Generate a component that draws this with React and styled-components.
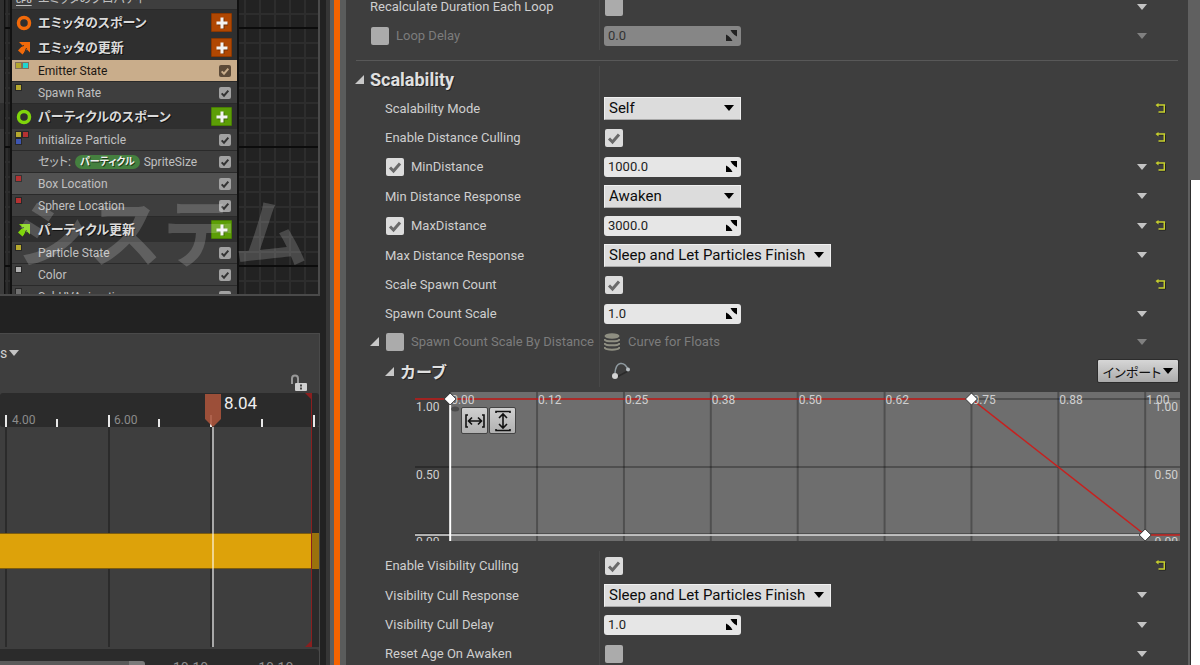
import { useState } from 'react'
import styled, { createGlobalStyle, css } from 'styled-components'

const modules = [
    { kind: 'item', label: 'エミッタのプロパティ', cpu: true },
    { kind: 'group', label: 'エミッタのスポーン', icon: 'ring', color: '#f26a0a', button: '#b04702' },
    { kind: 'group', label: 'エミッタの更新', icon: 'arrow', color: '#f26a0a', button: '#b04702' },
    { kind: 'item', label: 'Emitter State', dots: ['#b5a82e', '#1fd6d0'], selected: true, check: true },
    { kind: 'item', label: 'Spawn Rate', dots: ['#b5a82e'], check: true },
    { kind: 'group', label: 'パーティクルのスポーン', icon: 'ring', color: '#80d60c', button: '#5c9e06' },
    { kind: 'item', label: 'Initialize Particle', dots: ['#b5a82e', '#b53232', '#3d55b0'], check: true },
    { kind: 'item', label: 'セット:', tag: 'パーティクル', rest: 'SpriteSize', check: true },
    { kind: 'item', label: 'Box Location', dots: ['#b53232'], light: true, check: true },
    { kind: 'item', label: 'Sphere Location', dots: ['#b53232'], check: true },
    { kind: 'group', label: 'パーティクル更新', icon: 'arrow', color: '#80d60c', button: '#5c9e06' },
    { kind: 'item', label: 'Particle State', dots: ['#b5a82e'], check: true },
    { kind: 'item', label: 'Color', dots: ['#b0b0b0'], check: true },
    { kind: 'item', label: 'SubUVAnimation', dots: ['#707070'], check: true },
]

const responses = ['Sleep and Let Particles Finish', 'Awaken', 'Sleep', 'Kill']

export default function App() {
    return (
        <>
            <GlobalStyle />
            <Screen>
                <LeftColumn>
                    <SystemGraph />
                    <Timeline />
                </LeftColumn>
                <Splitter />
                <Details />
                <ScrollGutter />
            </Screen>
        </>
    )
}

function SystemGraph() {
    return (
        <Graph>
            <NeighbourNode />
            <Node>
                {modules.map((module, index) => (
                    module.kind === 'group' ?
                        <GroupRow key={index}>
                            <GroupIcon type={module.icon} color={module.color} />
                            <GroupName>{module.label}</GroupName>
                            <AddButton type="button" $color={module.button} aria-label={`${module.label} +`}>
                                <svg width="12" height="12" viewBox="0 0 12 12">
                                    <path d="M5.500 1.500h3v4h3.500v3H8.500V12h-3V8.500H1.500v-3h4z" fill="#000" opacity=".35" />
                                    <path d="M4.500 0.500h3v4h4v3h-4v4h-3v-4h-4v-3h4z" fill="#f2f2f2" />
                                </svg>
                            </AddButton>
                        </GroupRow> :
                        <ModuleRow key={index} $selected={module.selected} $light={module.light}>
                            {module.cpu ? <Cpu>CPU</Cpu> : <Dots>
                                {(module.dots || []).map((color) => <Dot key={color} $color={color} />)}
                            </Dots>}
                            <ModuleName>
                                {module.label}
                                {module.tag && <Tag>{module.tag}</Tag>}
                                {module.rest}
                            </ModuleName>
                            {module.check && <Tick small dark={module.selected} name={module.label} start />}
                        </ModuleRow>
                ))}
            </Node>
            <Watermark>システム</Watermark>
        </Graph>
    )
}

function GroupIcon({ type, color }) {
    return (
        <svg width="16" height="16" viewBox="0 0 16 16">
            {type === 'ring' ?
                <circle cx="8" cy="8" r="5.500" fill="none" stroke={color} strokeWidth="3.500" /> :
                <path d="M3 2H14V12.500L11 9.500L6.500 14.500L2 10.500L6.500 5.500Z" fill={color} />}
            {type === 'arrow' && <path d="M2 7.500L8 5.500M8 14L10.500 8" stroke="#2f2f2f" />}
        </svg>
    )
}

function Tick({ start = false, small, dark, disabled, name }) {
    const [checked, setChecked] = useState(start)

    return (
        <TickBox $small={small}>
            <TickInput
                type="checkbox"
                aria-label={name}
                checked={checked}
                onChange={(event) => setChecked(event.target.checked)}
                $small={small}
                $dark={dark}
                disabled={disabled}
            />
            {checked && <svg viewBox="0 0 18 18">
                <path d="M4 9.500L7.500 13L14 5.500" fill="none" stroke={dark ? '#c9ad8b' : small ? '#333' : '#6a6a6a'} strokeWidth="3" />
            </svg>}
        </TickBox>
    )
}

function Caret({ color = '#c4c4c4' }) {
    return (
        <svg width="10" height="6" viewBox="0 0 10 6">
            <path d="M0 0H10L5 6Z" fill={color} />
        </svg>
    )
}

function Expander() {
    return (
        <svg width="9" height="9" viewBox="0 0 9 9">
            <path d="M9 0V9H0Z" fill="#c8c8c8" />
        </svg>
    )
}

function Combo({ options, wide, name }) {
    return (
        <Overlay $width={wide ? '227px' : '137px'}>
            <Select aria-label={name}>
                {options.map((option) => <option key={option}>{option}</option>)}
            </Select>
            <OverlayIcon $right="7px"><Caret color="#000" /></OverlayIcon>
        </Overlay>
    )
}

function NumberBox({ value, disabled, name }) {
    const [number, setNumber] = useState(value)

    return (
        <Overlay $width="137px">
            <NumberInput aria-label={name} value={number} disabled={disabled} onChange={(event) => setNumber(event.target.value)} />
            <OverlayIcon $right="4px">
                <svg width="11" height="11" viewBox="0 0 11 11">
                    <path d="M4.500 0H11V6.500L8.500 5L6 2.500ZM0 4.500L2.500 6L5 8.500L6.500 11H0Z" fill={disabled ? '#222' : '#000'} />
                </svg>
            </OverlayIcon>
        </Overlay>
    )
}

function Property({ label, depth = 2, tall, short, edit, muted, expander, menu, reset, children }) {
    return (
        <Row $height={tall ? '30px' : short ? '27px' : '29px'}>
            <Label $depth={expander ? 1 : depth} $muted={muted}>
                {expander && <Expander />}
                {edit && <Tick name={label} start={edit === 'on'} />}
                <span>{label}</span>
            </Label>
            <Value $muted={muted}>{children}</Value>
            <Cell>{menu && <IconButton type="button" aria-label={`${label} menu`}><Caret color={muted ? '#808080' : '#c4c4c4'} /></IconButton>}</Cell>
            <Cell>
                {reset && <IconButton type="button" aria-label={`${label} reset`}>
                    <svg width="12" height="11" viewBox="0 0 12 11" fill="none">
                        <path d="M4 3H10.500V10H4" stroke="#1c1c1c" />
                        <path d="M2 2H9.300V9H3.500" stroke="#c6cf2c" strokeWidth="1.500" />
                        <path d="M0.500 2L3.500 0V4.500Z" fill="#c6cf2c" />
                    </svg>
                </IconButton>}
            </Cell>
        </Row>
    )
}

function Details() {
    return (
        <Panel>
            <Property label="Recalculate Duration Each Loop" depth={1} menu>
                <Tick name="Recalculate Duration Each Loop" />
            </Property>
            <Property label="Loop Delay" depth={1} edit="off" muted menu>
                <NumberBox name="Loop Delay value" value="0.0" disabled />
            </Property>
            <Divider />
            <Row $height="27px">
                <Heading><Expander />Scalability</Heading>
                <Value />
            </Row>
            <Property label="Scalability Mode" tall reset>
                <Combo name="Scalability Mode" options={['Self', 'System']} />
            </Property>
            <Property label="Enable Distance Culling" reset>
                <Tick name="Enable Distance Culling" start />
            </Property>
            <Property label="MinDistance" edit="on" menu reset>
                <NumberBox name="MinDistance value" value="1000.0" />
            </Property>
            <Property label="Min Distance Response" tall menu>
                <Combo name="Min Distance Response" options={['Awaken', 'Sleep', 'Kill']} />
            </Property>
            <Property label="MaxDistance" edit="on" menu reset>
                <NumberBox name="MaxDistance value" value="3000.0" />
            </Property>
            <Property label="Max Distance Response" tall menu>
                <Combo name="Max Distance Response" options={responses} wide />
            </Property>
            <Property label="Scale Spawn Count" reset>
                <Tick name="Scale Spawn Count" start />
            </Property>
            <Property label="Spawn Count Scale" menu>
                <NumberBox name="Spawn Count Scale value" value="1.0" />
            </Property>
            <Property label="Spawn Count Scale By Distance" edit="off" short muted expander menu>
                <svg width="16" height="18" viewBox="0 0 16 18">
                    <path d="M0.500 6c0 3 15 3 15 0M0.500 10c0 3 15 3 15 0M0.500 14c0 3.500 15 3.500 15 0" fill="none" stroke="#8f8f82" strokeWidth="2" />
                    <ellipse cx="8" cy="3" rx="7.500" ry="2.800" fill="#8f8f82" />
                </svg>
                <span>Curve for Floats</span>
            </Property>
            <CurveRow>
                <CurveHeading><Expander />カーブ</CurveHeading>
                <Value>
                    <svg width="28" height="20" viewBox="-6 0 28 20">
                        <path d="M5 12C6 0 14 0 18 8" fill="none" stroke="#8f9aa0" strokeWidth="1.500" />
                        <path d="M5 17L18 10" stroke="#2a2a2a" strokeWidth="1.500" />
                        <circle cx="5" cy="15" r="3" fill="#d4d4d4" />
                        <circle cx="18" cy="8.500" r="2" fill="#b8bec2" />
                    </svg>
                </Value>
                <ImportButton type="button">インポート<Caret color="#000" /></ImportButton>
            </CurveRow>
            <CurveEditor />
            <Property label="Enable Visibility Culling" reset>
                <Tick name="Enable Visibility Culling" start />
            </Property>
            <Property label="Visibility Cull Response" tall menu>
                <Combo name="Visibility Cull Response" options={responses} wide />
            </Property>
            <Property label="Visibility Cull Delay" menu>
                <NumberBox name="Visibility Cull Delay value" value="1.0" />
            </Property>
            <Property label="Reset Age On Awaken" menu>
                <Tick name="Reset Age On Awaken" />
            </Property>
        </Panel>
    )
}

const times = ['0.00', '0.12', '0.25', '0.38', '0.50', '0.62', '0.75', '0.88', '1.00']
const levels = [['1.00', 7], ['0.50', 75], ['0.00', 142]]
const keys = [[0, 7], [0.75, 7], [1, 143]]

// the plot starts after the value labels and leaves some room behind t = 1
const timeToX = (t) => `${4.6 + 90.85 * t}%`

function CurveEditor() {
    return (
        <CurveArea>
            <CurveChart>
                <rect x={timeToX(0)} y="0" width="100%" height="149" fill="#6e6e6e" />
                {levels.map(([label, y]) => (
                    <line key={label} x1="0" x2="100%" y1={y} y2={y} stroke="#000" strokeOpacity=".28" strokeWidth="2" />
                ))}
                {times.map((label, index) => (
                    <line key={label} x1={timeToX(index / 8)} x2={timeToX(index / 8)} y1="0" y2="149" stroke="#000" strokeOpacity=".28" strokeWidth="2" />
                ))}
                <line x1="0" x2={timeToX(1)} y1="143" y2="143" stroke="#dcdcdc" strokeWidth="1.500" />
                <line x1={timeToX(0)} x2={timeToX(0)} y1="7" y2="149" stroke="#fff" strokeWidth="2" />
                <svg x={timeToX(0)} y="17" overflow="visible">
                    <ellipse cx="5" cy="0" rx="4" ry="2.500" fill="#4c4c4c" />
                </svg>
                <g stroke="#c8201e" strokeWidth="1.500">
                    <line x1="0" x2={timeToX(0.75)} y1="7" y2="7" />
                    <line x1={timeToX(0.75)} x2={timeToX(1)} y1="7" y2="143" />
                    <line x1={timeToX(1)} x2="100%" y1="143" y2="143" />
                </g>
                {times.map((label, index) => (
                    <text key={label} x={timeToX(index / 8)} dx="1" y="12">{label}</text>
                ))}
                {levels.map(([label, y]) => (
                    <g key={label}>
                        <text x="1" y={y + 12}>{label}</text>
                        <text x="100%" dx="-2" y={y + 12} textAnchor="end">{label}</text>
                    </g>
                ))}
                {keys.map(([t, y]) => (
                    <svg key={t} x={timeToX(t)} y={y} overflow="visible">
                        <path d="M0-6L6 0L0 6L-6 0Z" fill="#fff" stroke="#333" />
                    </svg>
                ))}
            </CurveChart>
            <FitButtons>
                <FitButton type="button" aria-label="Fit horizontally">
                    <svg width="22" height="22" viewBox="0 0 22 22" fill="none" stroke="#111" strokeWidth="1.600">
                        <path d="M4 5H2V17H4M18 5H20V17H18M4.500 11H17.500M8 7.500L4.500 11L8 14.500M14 7.500L17.500 11L14 14.500" />
                    </svg>
                </FitButton>
                <FitButton type="button" aria-label="Fit vertically">
                    <svg width="22" height="22" viewBox="0 0 22 22" fill="none" stroke="#111" strokeWidth="1.600">
                        <path d="M4 3V1.500H18V3M4 19V20.500H18V19M11 4.500V17.500M7 8L11 4L15 8M7 14L11 18L15 14" />
                    </svg>
                </FitButton>
            </FitButtons>
        </CurveArea>
    )
}

function Timeline() {
    return (
        <TimelinePanel>
            <TimelineMenu type="button">s<Caret /></TimelineMenu>
            <LockRow>
                <IconButton type="button" aria-label="Lock">
                    <svg width="18" height="18" viewBox="0 0 18 18">
                        <path d="M2 10V4.500C2 0.500 8 0.500 8 4.500V9" fill="none" stroke="#999" strokeWidth="2" />
                        <rect x="5" y="9" width="12" height="8" rx="1" fill="#d0d0d0" />
                        <path d="M10 10.500h2v2h-2zM10 13.500h2v2h-2z" fill="#444" />
                    </svg>
                </IconButton>
            </LockRow>
            <TimeChart>
                <rect width="100%" height="34" rx="3" fill="#2b2b2b" />
                <rect x="312" y="34" width="7" height="220" fill="#2a2a2a" />
                {[6, 109, 211].map((x) => (
                    <line key={x} x1={x} x2={x} y1="34" y2="254" stroke="#2b2b2b" strokeWidth="2" />
                ))}
                {[6, 109, 211, 314].map((x) => (
                    <line key={x} x1={x} x2={x} y1="22" y2="34" stroke="#e8e8e8" strokeWidth="2" />
                ))}
                {[57, 159, 262].map((x) => (
                    <line key={x} x1={x} x2={x} y1="26" y2="34" stroke="#e8e8e8" strokeWidth="2" />
                ))}
                <text x="12" y="31">4.00</text>
                <text x="114" y="31">6.00</text>
                <rect y="140" width="311" height="36" fill="#7c5c10" />
                <rect y="141" width="311" height="34" fill="#dda20a" />
                <rect x="311" y="140" width="8" height="36" fill="#9a720c" />
                <path d="M305 0H312V6H311ZM305 254H312V248H311Z" fill="#8a1f1f" />
                <rect x="311" y="0" width="1" height="254" fill="#8a1f1f" />
                <line x1="213" x2="213" y1="34" y2="254" stroke="#fff" strokeOpacity=".55" strokeWidth="2" />
                <path d="M205 1H221V26L213 34L205 26Z" fill="#a8533b" fillOpacity=".9" />
                <TimeNow x="224" y="16">8.04</TimeNow>
            </TimeChart>
            <RangeBar>
                <RangeThumb />
                <RangeText>10.10</RangeText>
                <RangeText>10.10</RangeText>
            </RangeBar>
        </TimelinePanel>
    )
}

const GlobalStyle = createGlobalStyle`
    * {
        box-sizing: border-box;
    }

    body {
        margin: 0;
        background: #222;
        color: #d2d2d2;
        font-family: Roboto, 'Noto Sans CJK JP', sans-serif;
        font-size: 13px;
    }

    button, input, select {
        margin: 0;
        border: 0;
        padding: 0;
        font: inherit;
    }
`

const Screen = styled.main`
    display: flex;
    height: 100vh;
    overflow: hidden;
`

const LeftColumn = styled.div`
    flex: 0 0 326px;
    display: flex;
    flex-direction: column;
    gap: 37px;
    padding-right: 6px;
    background: #222;
`

const Graph = styled.section`
    position: relative;
    flex: 0 0 296px;
    display: flex;
    gap: 7px;
    overflow: hidden;
    border: solid #4a4a4a;
    border-width: 0 2px 2px 0;
    background-color: #222;
    background-image:
        linear-gradient(#0c0c0c 2px, transparent 2px),
        repeating-linear-gradient(#2d2d2d 0 2px, transparent 2px 15px),
        repeating-linear-gradient(90deg, #2d2d2d 0 2px, transparent 2px 15px);
    background-size: 119px 119px;
    background-position: 110px 27px;
`

const NeighbourNode = styled.div`
    flex: 0 0 5px;
    border-right: 1px solid #111;
    background: linear-gradient(#2f2f2f 0 60px, #3c3c3c 60px 103px, #2f2f2f 103px 129px, #3c3c3c 129px);
`

const Node = styled.div`
    flex: 0 0 225px;
    margin-top: -12px;
    background: #3c3c3c;
    box-shadow: 0 0 0 2px #111;
    align-self: flex-start;
`

const GroupRow = styled.div`
    display: flex;
    align-items: center;
    height: 25px;
    padding: 0 5px 0 4px;
    background: #2f2f2f;
    gap: 6px;
`

const GroupName = styled.strong`
    flex: 1;
    color: #dadada;
    font-size: 13px;
    line-height: 20px;
    font-feature-settings: 'palt';
    text-shadow: 1px 1px 0 #111;
`

const AddButton = styled.button`
    display: grid;
    place-items: center;
    width: 21px;
    height: 19px;
    border: 1px solid rgba(0, 0, 0, 0.2);
    border-radius: 1px;
    background: ${(props) => props.$color};
`

const ModuleRow = styled.div`
    display: flex;
    align-items: center;
    height: 22px;
    padding: 0 6px 0 4px;
    border-bottom: 1px solid #2a2a2a;
    background: ${(props) => props.$selected ? '#c9ad8b' : props.$light ? '#525252' : '#3e3e3e'};
    color: ${(props) => props.$selected ? '#1c1712' : '#c0c0c0'};
`

const Dots = styled.div`
    display: grid;
    grid-template-columns: 5px 5px;
    grid-auto-rows: 5px;
    gap: 2px;
    align-content: start;
    flex: 0 0 22px;
    align-self: stretch;
    padding-top: 3px;
`

const Dot = styled.i`
    background: ${(props) => props.$color};
    box-shadow: 0 0 0 1px rgba(0, 0, 0, 0.35);
`

const Cpu = styled.b`
    flex: 0 0 22px;
    font-size: 8px;
    line-height: 14px;
    text-decoration: underline;
    text-underline-offset: 2px;
    padding-top: 4px;
`

const ModuleName = styled.span`
    flex: 1;
    display: flex;
    align-items: center;
    gap: 4px;
    font-size: 12px;
    line-height: 18px;
    white-space: nowrap;
    font-feature-settings: 'palt';
`

const Tag = styled.span`
    padding: 0 5px;
    border-radius: 7px;
    background: #45803f;
    color: #f0f0f0;
    font-size: 10px;
    font-weight: 700;
    line-height: 14px;
    text-shadow: 1px 1px 0 #1d3a1a;
`

const Watermark = styled.div`
    position: absolute;
    right: 10px;
    bottom: 8px;
    color: rgba(255, 255, 255, 0.18);
    font-size: 74px;
    font-weight: 700;
    line-height: 100px;
    pointer-events: none;
`

const TimelinePanel = styled.section`
    flex: 1;
    display: flex;
    flex-direction: column;
    min-height: 0;
    overflow: hidden;
    border-top: 1px solid #4a4a4a;
    border-right: 1px solid #4a4a4a;
    background: #3e3e3e;
`

const TimelineMenu = styled.button`
    display: flex;
    flex: none;
    align-items: center;
    align-self: flex-start;
    gap: 2px;
    height: 38px;
    background: none;
    color: #d2d2d2;
    font-size: 14px;
`

const LockRow = styled.div`
    display: flex;
    flex: none;
    justify-content: flex-end;
    padding: 2px 11px 1px 0;
`

const TimeChart = styled.svg`
    flex: 0 0 254px;
    width: 100%;
    fill: #8c8c8c;
    font-size: 12px;
`

const TimeNow = styled.text`
    fill: #eee;
    font-size: 17px;
`

const RangeBar = styled.div`
    flex: 0 0 30px;
    display: flex;
    align-items: flex-start;
    gap: 50px;
    margin-top: 2px;
    border-radius: 0 4px 0 0;
    background: #2b2b2b;
`

const RangeThumb = styled.div`
    flex: 0 0 145px;
    height: 12px;
    margin: 12px -22px 0 0;
    border-radius: 0 3px 3px 0;
    background: linear-gradient(90deg, #5a5a5a 0 129px, #7a7a7a 129px);
`

const RangeText = styled.span`
    padding-top: 10px;
    color: #8c8c8c;
    font-size: 14px;
    line-height: 18px;
`

const Splitter = styled.div`
    flex: 0 0 20px;
    background: linear-gradient(90deg, #363636 0 4px, #5e5e5e 4px 8px, #f66300 8px 14px, #5a5c5c 14px);
`

const Panel = styled.section`
    flex: 1;
    min-width: 0;
    margin-top: -8px;
    background: #3e3e3e;
`

const Row = styled.div`
    display: grid;
    grid-template-columns: 253px minmax(0, 1fr) 24px 14px;
    align-items: stretch;
    height: ${(props) => props.$height};
    padding-right: 20px;
`

const Label = styled.div`
    display: flex;
    align-items: center;
    gap: 6px;
    padding-left: ${(props) => props.$depth === 1 ? '24px' : '39px'};
    color: ${(props) => props.$muted ? '#7c7c7c' : '#cfcfcf'};
    white-space: nowrap;
`

const Value = styled.div`
    display: flex;
    align-items: center;
    gap: 8px;
    padding-left: 4px;
    border-left: 1px solid #484848;
    color: ${(props) => props.$muted ? '#7c7c7c' : '#cfcfcf'};
`

const Cell = styled.div`
    display: grid;
    place-items: center;
`

const IconButton = styled.button`
    display: grid;
    place-items: center;
    background: none;
`

const headingText = css`
    display: flex;
    align-items: center;
    gap: 6px;
    margin: 0;
    color: #e0e0e0;
    font-weight: 700;
    text-shadow: 1px 1px 0 #222;
`

const Heading = styled.h2`
    ${headingText}
    padding-left: 9px;
    font-size: 18px;
`

const CurveHeading = styled.h3`
    ${headingText}
    padding-left: 39px;
    font-size: 16px;
`

const Divider = styled.hr`
    height: 1px;
    margin: 10px 10px 5px 10px;
    border: 0;
    background: #585858;
`

const CurveRow = styled.div`
    display: grid;
    grid-template-columns: 253px minmax(0, 1fr) auto;
    height: 32px;
    padding-right: 9px;
`

const ImportButton = styled.button`
    display: flex;
    align-items: center;
    align-self: center;
    justify-content: center;
    gap: 2px;
    width: 82px;
    height: 24px;
    border: 1px solid #2c2c2c;
    border-radius: 2px;
    background: linear-gradient(#d6d6d6, #ababab);
    color: #111;
    font-size: 13px;
    font-feature-settings: 'palt';
`

const Overlay = styled.div`
    display: grid;
    align-items: center;
    width: ${(props) => props.$width};

    > * {
        grid-area: 1 / 1;
    }
`

const OverlayIcon = styled.span`
    display: flex;
    justify-self: end;
    padding-right: ${(props) => props.$right};
    pointer-events: none;
`

const Select = styled.select`
    appearance: none;
    width: 100%;
    height: 23px;
    padding: 0 4px;
    border: 1px solid #f0f0f0;
    border-bottom-color: #a8a8a8;
    background: #dcdcdc;
    color: #0c0c0c;
    font-size: 15px;
`

const NumberInput = styled.input`
    width: 100%;
    height: 20px;
    padding: 0 4px;
    border-radius: 3px;
    background: #e6e6e6;
    color: #222;

    &:disabled {
        background: #868686;
        color: #333;
    }
`

const TickBox = styled.label`
    display: grid;
    flex: none;
    width: ${(props) => props.$small ? '12px' : '20px'};
    height: ${(props) => props.$small ? '12px' : '18px'};
    padding: ${(props) => props.$small ? '0' : '0 1px'};

    > * {
        grid-area: 1 / 1;
    }

    svg {
        pointer-events: none;
    }
`

const TickInput = styled.input`
    appearance: none;
    width: 100%;
    height: 100%;
    border-radius: 2px;
    background: #ababab;

    &:checked {
        background: ${(props) => props.$dark ? '#5c4a38' : props.$small ? '#a2a2a2' : '#dcdcdc'};
    }
`

const CurveArea = styled.div`
    position: relative;
    height: 149px;
    margin: 5px 8px 10px 69px;
`

const CurveChart = styled.svg`
    display: block;
    width: 100%;
    height: 149px;
    fill: #d0d0d0;
    font-size: 12px;
`

const FitButtons = styled.div`
    position: absolute;
    top: 15px;
    left: 46px;
    display: flex;
    gap: 1px;
`

const FitButton = styled.button`
    display: grid;
    place-items: center;
    width: 27px;
    height: 27px;
    border: 1px solid #444;
    border-radius: 2px;
    background: linear-gradient(#d0d0d0, #b0b0b0);
`

const ScrollGutter = styled.div`
    flex: 0 0 12px;
    background: linear-gradient(#606060 0 180px, transparent 180px), linear-gradient(90deg, #606060 0 2px, #2e2e2e 2px 3px, #fff 3px);
`
